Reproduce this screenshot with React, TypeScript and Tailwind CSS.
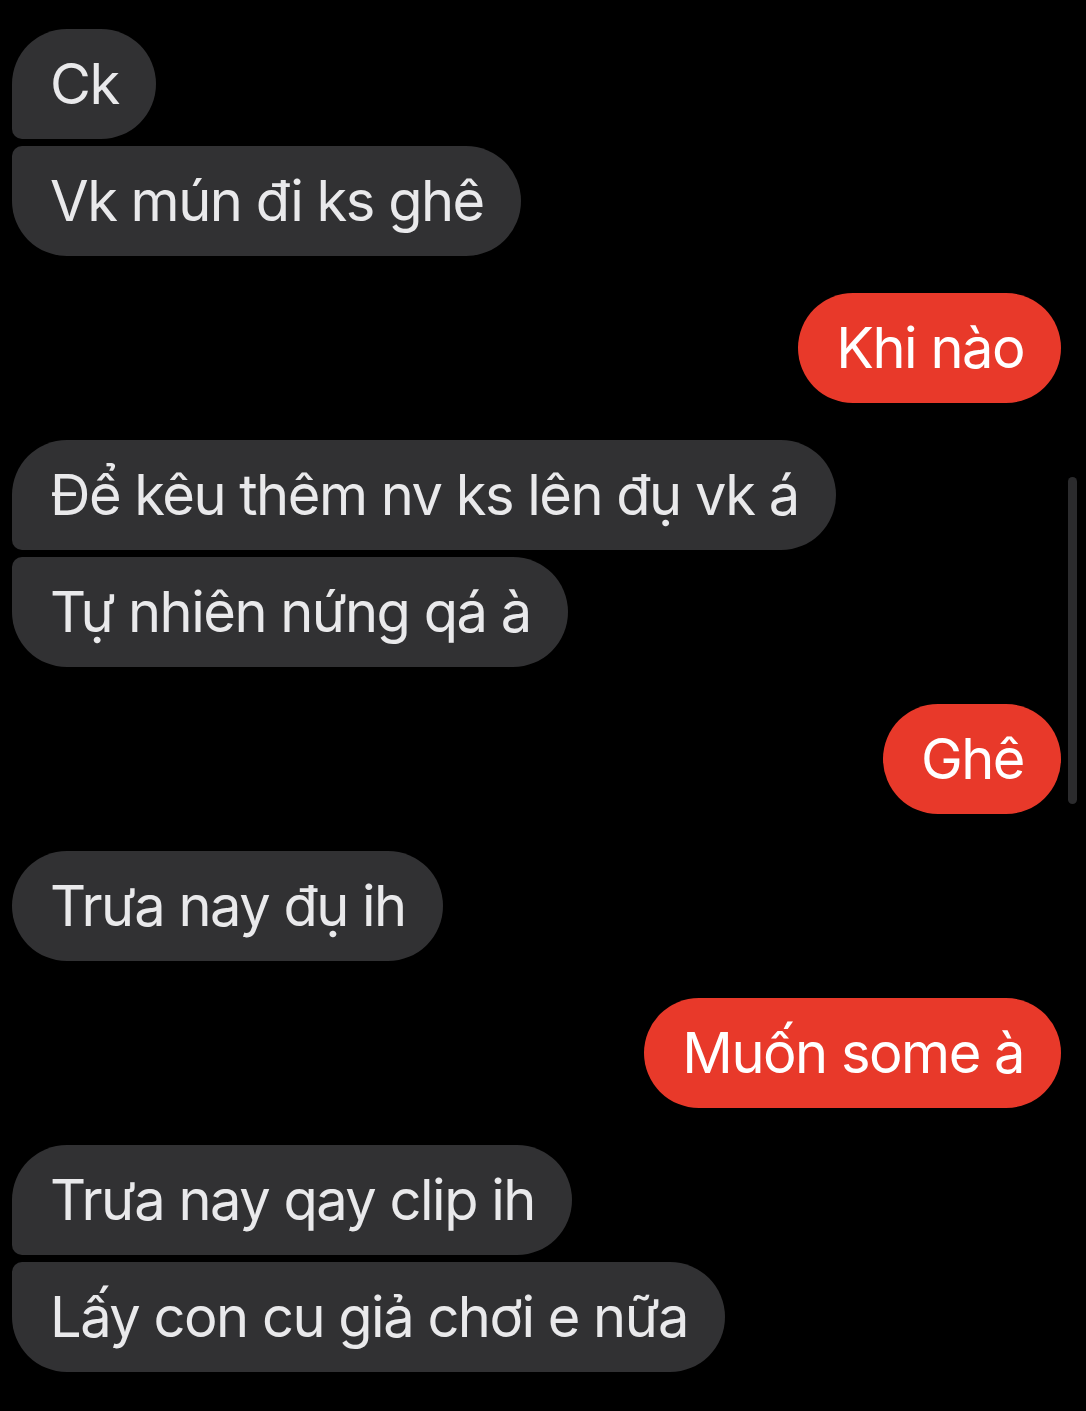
import React from "react";

type Msg = { text: string; me: boolean; shape: string; mt: string };

const msgs: Msg[] = [
  { text: "Ck", me: false, shape: "rounded-[55px] rounded-bl-[10px]", mt: "mt-0" },
  { text: "Vk mún đi ks ghê", me: false, shape: "rounded-[55px] rounded-tl-[10px]", mt: "mt-[7px]" },
  { text: "Khi nào", me: true, shape: "rounded-[55px]", mt: "mt-[37px]" },
  { text: "Để kêu thêm nv ks lên đụ vk á", me: false, shape: "rounded-[55px] rounded-bl-[10px]", mt: "mt-[37px]" },
  { text: "Tự nhiên nứng qá à", me: false, shape: "rounded-[55px] rounded-tl-[10px]", mt: "mt-[7px]" },
  { text: "Ghê", me: true, shape: "rounded-[55px]", mt: "mt-[37px]" },
  { text: "Trưa nay đụ ih", me: false, shape: "rounded-[55px]", mt: "mt-[37px]" },
  { text: "Muốn some à", me: true, shape: "rounded-[55px]", mt: "mt-[37px]" },
  { text: "Trưa nay qay clip ih", me: false, shape: "rounded-[55px] rounded-bl-[10px]", mt: "mt-[37px]" },
  { text: "Lấy con cu giả chơi e nữa", me: false, shape: "rounded-[55px] rounded-tl-[10px]", mt: "mt-[7px]" },
];

export default function App() {
  return (
    <div
      className="relative w-[1086px] h-[1411px] bg-black overflow-hidden pt-[29px] pl-[12px] pr-[25px]"
      style={{ fontFamily: "Inter, 'Noto Sans', sans-serif" }}
    >
      <div className="flex flex-col">
        {msgs.map((m, i) => (
          <div key={i} className={`flex ${m.me ? "justify-end" : "justify-start"} ${m.mt}`}>
            <div
              className={`h-[110px] flex items-center pl-[38px] pr-[37px] text-[56px] tracking-[-1.5px] leading-none whitespace-nowrap ${m.shape} ${
                m.me ? "bg-[#e8392a] text-white" : "bg-[#313133] text-[#e9e9eb]"
              }`}
            >
              {m.text}
            </div>
          </div>
        ))}
      </div>
      <div className="absolute left-[1068px] top-[477px] w-[9px] h-[327px] rounded-full bg-[#2b2b2d]" />
    </div>
  );
}
